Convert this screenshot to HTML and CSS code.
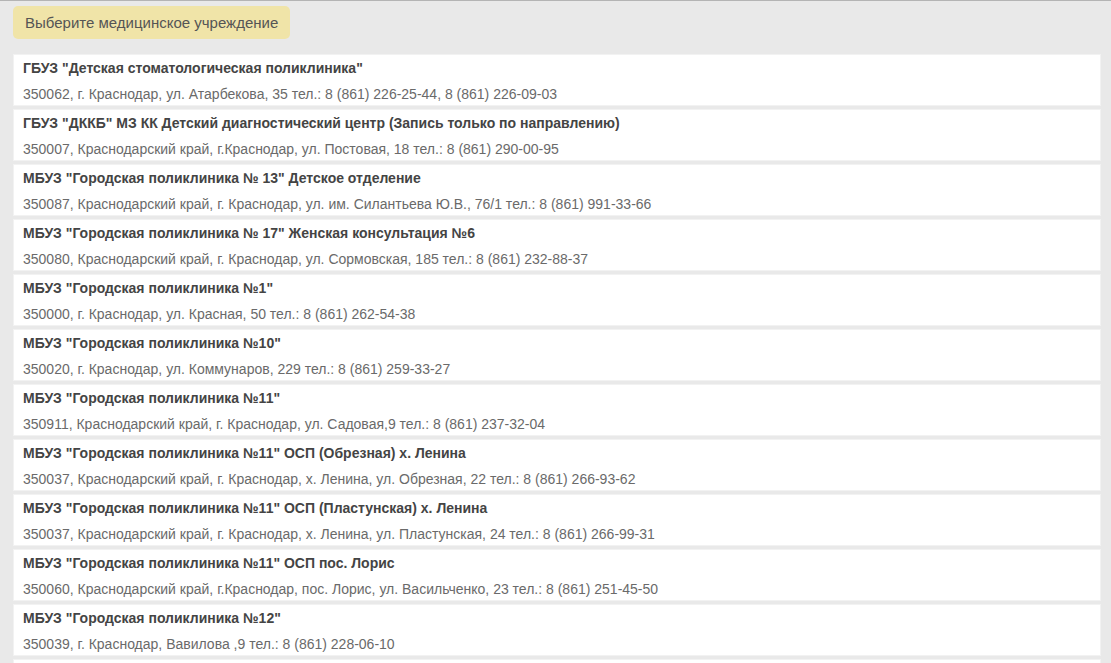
FILE: index.html
```html
<!DOCTYPE html>
<html lang="ru">
<head>
  <meta charset="UTF-8">
  <meta name="viewport" content="width=device-width, initial-scale=1.0">
  <title>Выберите медицинское учреждение</title>
  <link rel="stylesheet" href="styles.css">
</head>
<body>
  <div class="shapka">
    <div class="knopka">Выберите медицинское учреждение</div>
  </div>

  <!-- список учреждений -->
  <div class="spisok">
    <div class="lpu">
      <div class="nazv">ГБУЗ "Детская стоматологическая поликлиника"</div>
      <div class="adres">350062, г. Краснодар, ул. Атарбекова, 35 тел.: 8 (861) 226-25-44, 8 (861) 226-09-03</div>
    </div>
    <div class="lpu">
      <div class="nazv">ГБУЗ "ДККБ" МЗ КК Детский диагностический центр (Запись только по направлению)</div>
      <div class="adres">350007, Краснодарский край, г.Краснодар, ул. Постовая, 18 тел.: 8 (861) 290-00-95</div>
    </div>
    <div class="lpu">
      <div class="nazv">МБУЗ "Городская поликлиника № 13" Детское отделение</div>
      <div class="adres">350087, Краснодарский край, г. Краснодар, ул. им. Силантьева Ю.В., 76/1 тел.: 8 (861) 991-33-66</div>
    </div>
    <div class="lpu">
      <div class="nazv">МБУЗ "Городская поликлиника № 17" Женская консультация №6</div>
      <div class="adres">350080, Краснодарский край, г. Краснодар, ул. Сормовская, 185 тел.: 8 (861) 232-88-37</div>
    </div>
    <div class="lpu">
      <div class="nazv">МБУЗ "Городская поликлиника №1"</div>
      <div class="adres">350000, г. Краснодар, ул. Красная, 50 тел.: 8 (861) 262-54-38</div>
    </div>
    <div class="lpu">
      <div class="nazv">МБУЗ "Городская поликлиника №10"</div>
      <div class="adres">350020, г. Краснодар, ул. Коммунаров, 229 тел.: 8 (861) 259-33-27</div>
    </div>
    <div class="lpu">
      <div class="nazv">МБУЗ "Городская поликлиника №11"</div>
      <div class="adres">350911, Краснодарский край, г. Краснодар, ул. Садовая,9 тел.: 8 (861) 237-32-04</div>
    </div>
    <div class="lpu">
      <div class="nazv">МБУЗ "Городская поликлиника №11" ОСП (Обрезная) х. Ленина</div>
      <div class="adres">350037, Краснодарский край, г. Краснодар, х. Ленина, ул. Обрезная, 22 тел.: 8 (861) 266-93-62</div>
    </div>
    <div class="lpu">
      <div class="nazv">МБУЗ "Городская поликлиника №11" ОСП (Пластунская) х. Ленина</div>
      <div class="adres">350037, Краснодарский край, г. Краснодар, х. Ленина, ул. Пластунская, 24 тел.: 8 (861) 266-99-31</div>
    </div>
    <div class="lpu">
      <div class="nazv">МБУЗ "Городская поликлиника №11" ОСП пос. Лорис</div>
      <div class="adres">350060, Краснодарский край, г.Краснодар, пос. Лорис, ул. Васильченко, 23 тел.: 8 (861) 251-45-50</div>
    </div>
    <div class="lpu">
      <div class="nazv">МБУЗ "Городская поликлиника №12"</div>
      <div class="adres">350039, г. Краснодар, Вавилова ,9 тел.: 8 (861) 228-06-10</div>
    </div>
    <!-- следующая карточка видна только краем -->
    <div class="lpu"></div>
  </div>
</body>
</html>
```

FILE: styles.css
```css
body, html {
  margin: 0;
  padding: 0;
  font-family: "Liberation Sans", Arial, sans-serif;
  background-color: #e9e9e9;
  overflow: hidden;
}

body {
  border-top: 1px solid #b4b4b4;
}

.shapka {
  padding: 5px 13px 0 13px;
  display: flex;
}

.knopka {
  background-color: #f0e4a8;
  color: #555;
  font-size: 15px;
  height: 33px;
  line-height: 33px;
  padding: 0 12px;
  border-radius: 5px;
  white-space: nowrap;
}

.spisok {
  margin: 15px 10px 0 13px;
  display: flex;
  flex-direction: column;
  gap: 3px;
}

.lpu {
  background: white;
  border: 1px solid #f2f2f2;
  height: 50px;
  padding: 0 9px;
  display: flex;
  flex-direction: column;
}

.nazv {
  font-size: 14px;
  font-weight: bold;
  color: #444;
  margin-top: 5px;
  line-height: 16px;
}

.adres {
  font-size: 14px;
  color: #6a6a6a;
  margin-top: 10px;
  line-height: 16px;
}
```
